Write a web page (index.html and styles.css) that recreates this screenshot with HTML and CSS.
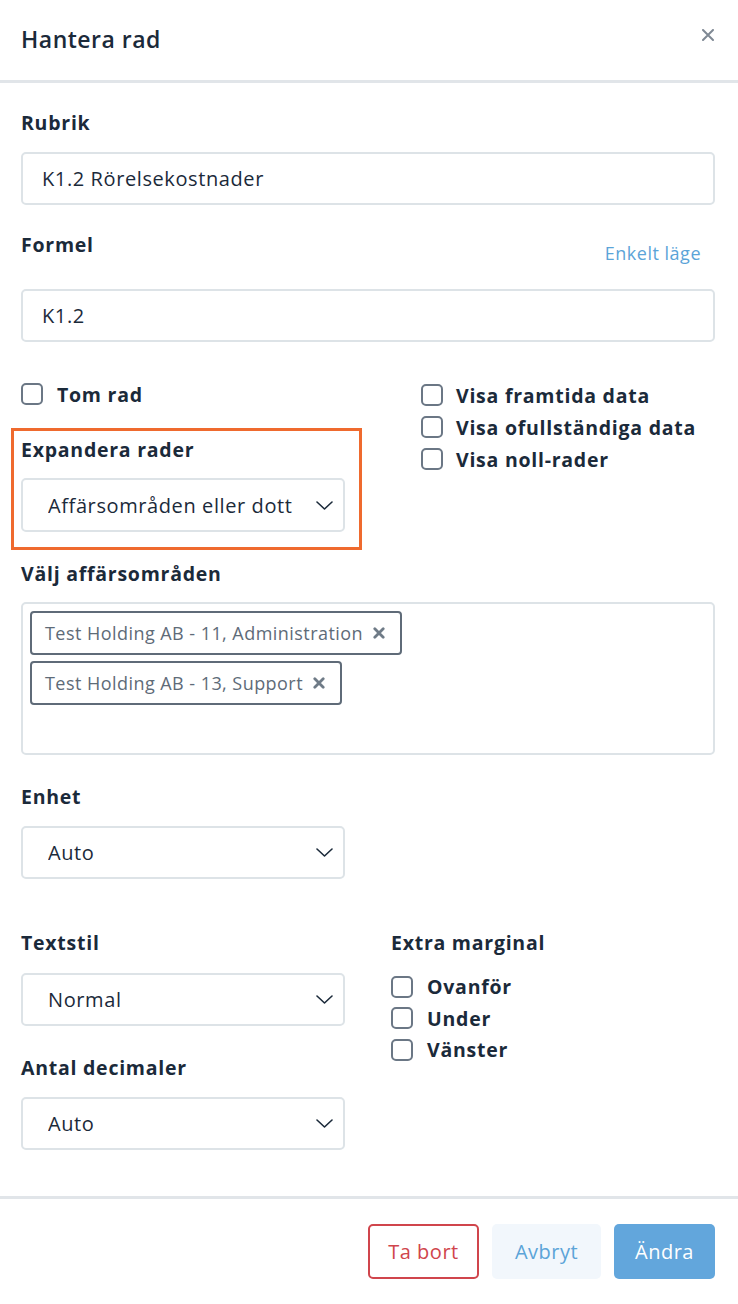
FILE: index.html
```html
<!DOCTYPE html>
<html lang="sv">
<head>
<meta charset="utf-8">
<title>Hantera rad</title>
<link rel="stylesheet" href="styles.css">
</head>
<body>
<div class="modal">
  <header class="modal-header">
    <h1 class="modal-title">Hantera rad</h1>
    <button class="close" aria-label="Stäng">
      <svg width="12" height="12" viewBox="0 0 12 12"><path d="M1 1L11 11M11 1L1 11" stroke="#7f8994" stroke-width="2" fill="none" stroke-linecap="round"/></svg>
    </button>
  </header>

  <main class="modal-body">
    <div class="field">
      <label class="label">Rubrik</label>
      <div class="input">K1.2 Rörelsekostnader</div>
    </div>

    <div class="field field-formel">
      <div class="label-row">
        <label class="label">Formel</label>
        <a class="link">Enkelt läge</a>
      </div>
      <div class="input">K1.2</div>
    </div>

    <div class="grid-top">
      <div class="col-left">
        <div class="check"><span class="box"></span><span class="check-label">Tom rad</span></div>
        <div class="highlight">
          <label class="label">Expandera rader</label>
          <div class="select">
            <span class="select-text">Affärsområden eller dott</span>
            <svg class="chev" width="17" height="9" viewBox="0 0 17 9"><path d="M1 1L8.5 8L16 1" stroke="#1b2a3a" stroke-width="1.6" fill="none" stroke-linecap="round" stroke-linejoin="round"/></svg>
          </div>
        </div>
      </div>
      <div class="col-right">
        <div class="check"><span class="box"></span><span class="check-label">Visa framtida data</span></div>
        <div class="check"><span class="box"></span><span class="check-label">Visa ofullständiga data</span></div>
        <div class="check"><span class="box"></span><span class="check-label">Visa noll-rader</span></div>
      </div>
    </div>

    <div class="field field-areas">
      <label class="label">Välj affärsområden</label>
      <div class="multi">
        <span class="tag">Test Holding AB - 11, Administration <svg class="tag-x" width="12" height="12" viewBox="0 0 12 12"><path d="M1.8 1.8L10.2 10.2M10.2 1.8L1.8 10.2" stroke="#6f7b87" stroke-width="2.8" stroke-linecap="round"/></svg></span>
        <span class="tag">Test Holding AB - 13, Support <svg class="tag-x" width="12" height="12" viewBox="0 0 12 12"><path d="M1.8 1.8L10.2 10.2M10.2 1.8L1.8 10.2" stroke="#6f7b87" stroke-width="2.8" stroke-linecap="round"/></svg></span>
      </div>
    </div>

    <div class="field field-enhet">
      <label class="label">Enhet</label>
      <div class="select">
        <span class="select-text">Auto</span>
        <svg class="chev" width="17" height="9" viewBox="0 0 17 9"><path d="M1 1L8.5 8L16 1" stroke="#1b2a3a" stroke-width="1.6" fill="none" stroke-linecap="round" stroke-linejoin="round"/></svg>
      </div>
    </div>

    <div class="grid-bottom">
      <div class="col-left2">
        <div class="field-sm">
          <label class="label">Textstil</label>
          <div class="select">
            <span class="select-text">Normal</span>
            <svg class="chev" width="17" height="9" viewBox="0 0 17 9"><path d="M1 1L8.5 8L16 1" stroke="#1b2a3a" stroke-width="1.6" fill="none" stroke-linecap="round" stroke-linejoin="round"/></svg>
          </div>
        </div>
        <div class="field-sm field-dec">
          <label class="label">Antal decimaler</label>
          <div class="select">
            <span class="select-text">Auto</span>
            <svg class="chev" width="17" height="9" viewBox="0 0 17 9"><path d="M1 1L8.5 8L16 1" stroke="#1b2a3a" stroke-width="1.6" fill="none" stroke-linecap="round" stroke-linejoin="round"/></svg>
          </div>
        </div>
      </div>
      <div class="col-right2">
        <label class="label">Extra marginal</label>
        <div class="checks2">
          <div class="check check-sm"><span class="box"></span><span class="check-label">Ovanför</span></div>
          <div class="check check-sm"><span class="box"></span><span class="check-label">Under</span></div>
          <div class="check check-sm"><span class="box"></span><span class="check-label">Vänster</span></div>
        </div>
      </div>
    </div>
  </main>

  <footer class="modal-footer">
    <button class="btn btn-danger">Ta bort</button>
    <button class="btn btn-light">Avbryt</button>
    <button class="btn btn-primary">Ändra</button>
  </footer>
</div>
</body>
</html>
```

FILE: styles.css
```css
* { box-sizing: border-box; }
html, body { margin: 0; padding: 0; background: #fff; }
body {
  font-family: "Open Sans", "Noto Sans", sans-serif;
  color: #1b2a3a;
  letter-spacing: 0.6px;
  width: 738px;
  height: 1304px;
  overflow: hidden;
}
.modal { display: flex; flex-direction: column; height: 1304px; }

.modal-header {
  height: 83px;
  border-bottom: 3px solid #e1e5e9;
  display: flex;
  align-items: flex-start;
  justify-content: space-between;
  padding: 0 23px 0 21px;
}
.modal-title {
  margin: 25px 0 0;
  font-size: 23px;
  font-weight: 600;
  line-height: 28px;
  letter-spacing: 0.5px;
}
.close {
  border: 0; background: none; padding: 0;
  margin-top: 29px; margin-right: 1px;
  width: 12px; height: 12px; display: block;
}
.close svg { display: block; }

.modal-body {
  flex: 1;
  padding: 28px 23px 0 21px;
  display: flex;
  flex-direction: column;
}
.label {
  display: block;
  font-size: 19.5px;
  font-weight: 700;
  line-height: 24px;
  letter-spacing: 0.75px;
}
.field .label { margin-bottom: 17px; }
.input, .select {
  height: 53px;
  border: 2px solid #dde3e7;
  border-radius: 5px;
  font-size: 20px;
  display: flex;
  align-items: center;
}
.input { padding-left: 19px; }
.field-formel { margin-top: 28px; }
.label-row {
  display: flex;
  justify-content: space-between;
  align-items: flex-start;
  margin-bottom: 24px;
}
.label-row .label { margin-bottom: 0; }
.link {
  color: #5ba4d8;
  font-size: 18px;
  line-height: 24px;
  letter-spacing: 0.5px;
  margin-top: 8px;
  margin-right: 14px;
}

.grid-top {
  margin-top: 36px;
  display: grid;
  grid-template-columns: 400px 1fr;
}
.check {
  display: flex;
  align-items: center;
  height: 32px;
}
.box {
  width: 22px; height: 22px;
  border: 2px solid #6b7785;
  border-radius: 5px;
  flex: none;
}
.check-label {
  margin-left: 14px;
  font-size: 19.5px;
  font-weight: 700;
  letter-spacing: 0.75px;
}
.col-right { padding-top: 1px; }
.col-right .check-label { margin-left: 13px; }

.highlight {
  margin: 18px 0 0 -10px;
  width: 351px;
  border: 3px solid #ef6a2e;
  padding: 7px 14px 15px 7px;
}
.highlight .label { margin-bottom: 16px; }
.select {
  width: 324px;
  padding: 0 10px 0 25px;
  justify-content: space-between;
}
.select-text { white-space: nowrap; overflow: hidden; }
.highlight .select { height: 54px; }
.chev { display: block; flex: none; margin-left: 8px; }

.field-areas { margin-top: 12px; }
.field-areas .label { margin-bottom: 16px; }
.multi {
  height: 153px;
  border: 2px solid #dde3e7;
  border-radius: 5px;
  padding: 7px 7px;
  display: flex;
  flex-direction: column;
  align-items: flex-start;
  gap: 6px;
}
.tag {
  height: 44px;
  border: 2px solid #5f6b78;
  border-radius: 4px;
  padding: 0 15px 0 13px;
  display: inline-flex;
  align-items: center;
  color: #5e6b78;
  font-size: 18px;
  letter-spacing: 0.45px;
}
.tag-x { margin-left: 10px; display: block; }

.field-enhet { margin-top: 30px; }
.field-enhet .label { margin-bottom: 17px; }

.grid-bottom {
  margin-top: 52px;
  display: grid;
  grid-template-columns: 370px 1fr;
}
.field-sm .label { margin-bottom: 18px; }
.field-sm .select { height: 53px; }
.field-dec { margin-top: 30px; }
.field-dec .label { margin-bottom: 17px; }
.checks2 { margin-top: 16px; }
.check-sm { height: 31.5px; }
.check-sm .check-label { margin-left: 14px; }

.modal-footer {
  border-top: 3px solid #e1e5e9;
  height: 108px;
  padding: 25px 23px 0 0;
  display: flex;
  justify-content: flex-end;
  align-items: flex-start;
  gap: 13px;
}
.btn {
  height: 55px;
  border-radius: 5px;
  font-family: inherit;
  font-size: 20px;
  letter-spacing: 0.5px;
  border: 0;
  padding: 0;
}
.btn-danger {
  width: 111px;
  border: 2px solid #d0454c;
  background: #fff;
  color: #d0454c;
}
.btn-light {
  width: 109px;
  background: #f2f7fc;
  color: #5ba4d8;
}
.btn-primary {
  width: 101px;
  background: #62a6dc;
  color: #fff;
}
```
